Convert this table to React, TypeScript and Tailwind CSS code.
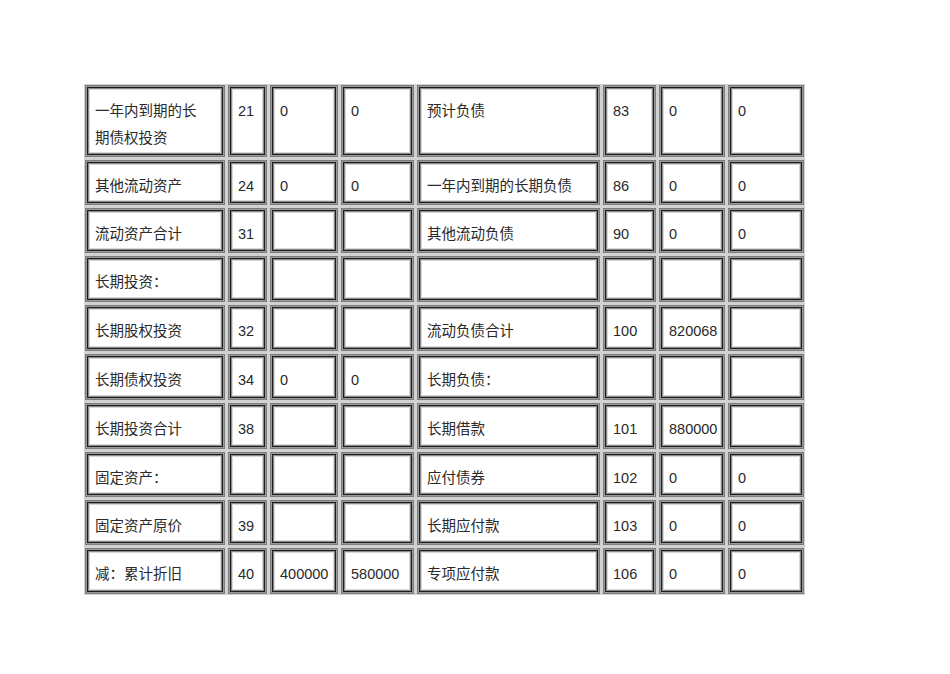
import React from "react";

const widths = ["w-[140px]", "w-[39px]", "w-[68px]", "w-[73px]", "w-[183px]", "w-[53px]", "w-[66px]", "w-[76px]"];
const heights = ["h-[72px]", "h-[45px]", "h-[45px]", "h-[46px]", "h-[46px]", "h-[46px]", "h-[46px]", "h-[45px]", "h-[45px]", "h-[46px]"];

const rows: React.ReactNode[][] = [
  [<>一年内到期的长<br />期债权投资</>, "21", "0", "0", "预计负债", "83", "0", "0"],
  ["其他流动资产", "24", "0", "0", "一年内到期的长期负债", "86", "0", "0"],
  ["流动资产合计", "31", "", "", "其他流动负债", "90", "0", "0"],
  ["长期投资：", "", "", "", "", "", "", ""],
  ["长期股权投资", "32", "", "", "流动负债合计", "100", "820068", ""],
  ["长期债权投资", "34", "0", "0", "长期负债：", "", "", ""],
  ["长期投资合计", "38", "", "", "长期借款", "101", "880000", ""],
  ["固定资产：", "", "", "", "应付债券", "102", "0", "0"],
  ["固定资产原价", "39", "", "", "长期应付款", "103", "0", "0"],
  ["减：累计折旧", "40", "400000", "580000", "专项应付款", "106", "0", "0"],
];

export default function App() {
  return (
    <div className="w-[950px] h-[674px] bg-white pt-[84px] pl-[84px] text-[#2a2a2a] font-['Liberation_Sans','Noto_Sans_CJK_SC',sans-serif]">
      <div className="inline-flex flex-col gap-[3px] bg-[#d2d2d2] p-px">
        {rows.map((row, ri) => (
          <div key={ri} className={"flex gap-[3px] " + heights[ri]}>
            {row.map((cell, ci) => (
              <div
                key={ci}
                className={
                  "bg-white border border-[#7c7c7c] shadow-[inset_0_0_0_1px_#9a9a9a,inset_0_0_0_2px_#1c1c1c,inset_0_0_0_3px_#8a8a8a,inset_0_0_0_4px_#d8d8d8] pl-[9px] pt-[12px] text-[14.5px] leading-[27px] whitespace-nowrap overflow-hidden " +
                  widths[ci]
                }
              >
                {cell}
              </div>
            ))}
          </div>
        ))}
      </div>
    </div>
  );
}
